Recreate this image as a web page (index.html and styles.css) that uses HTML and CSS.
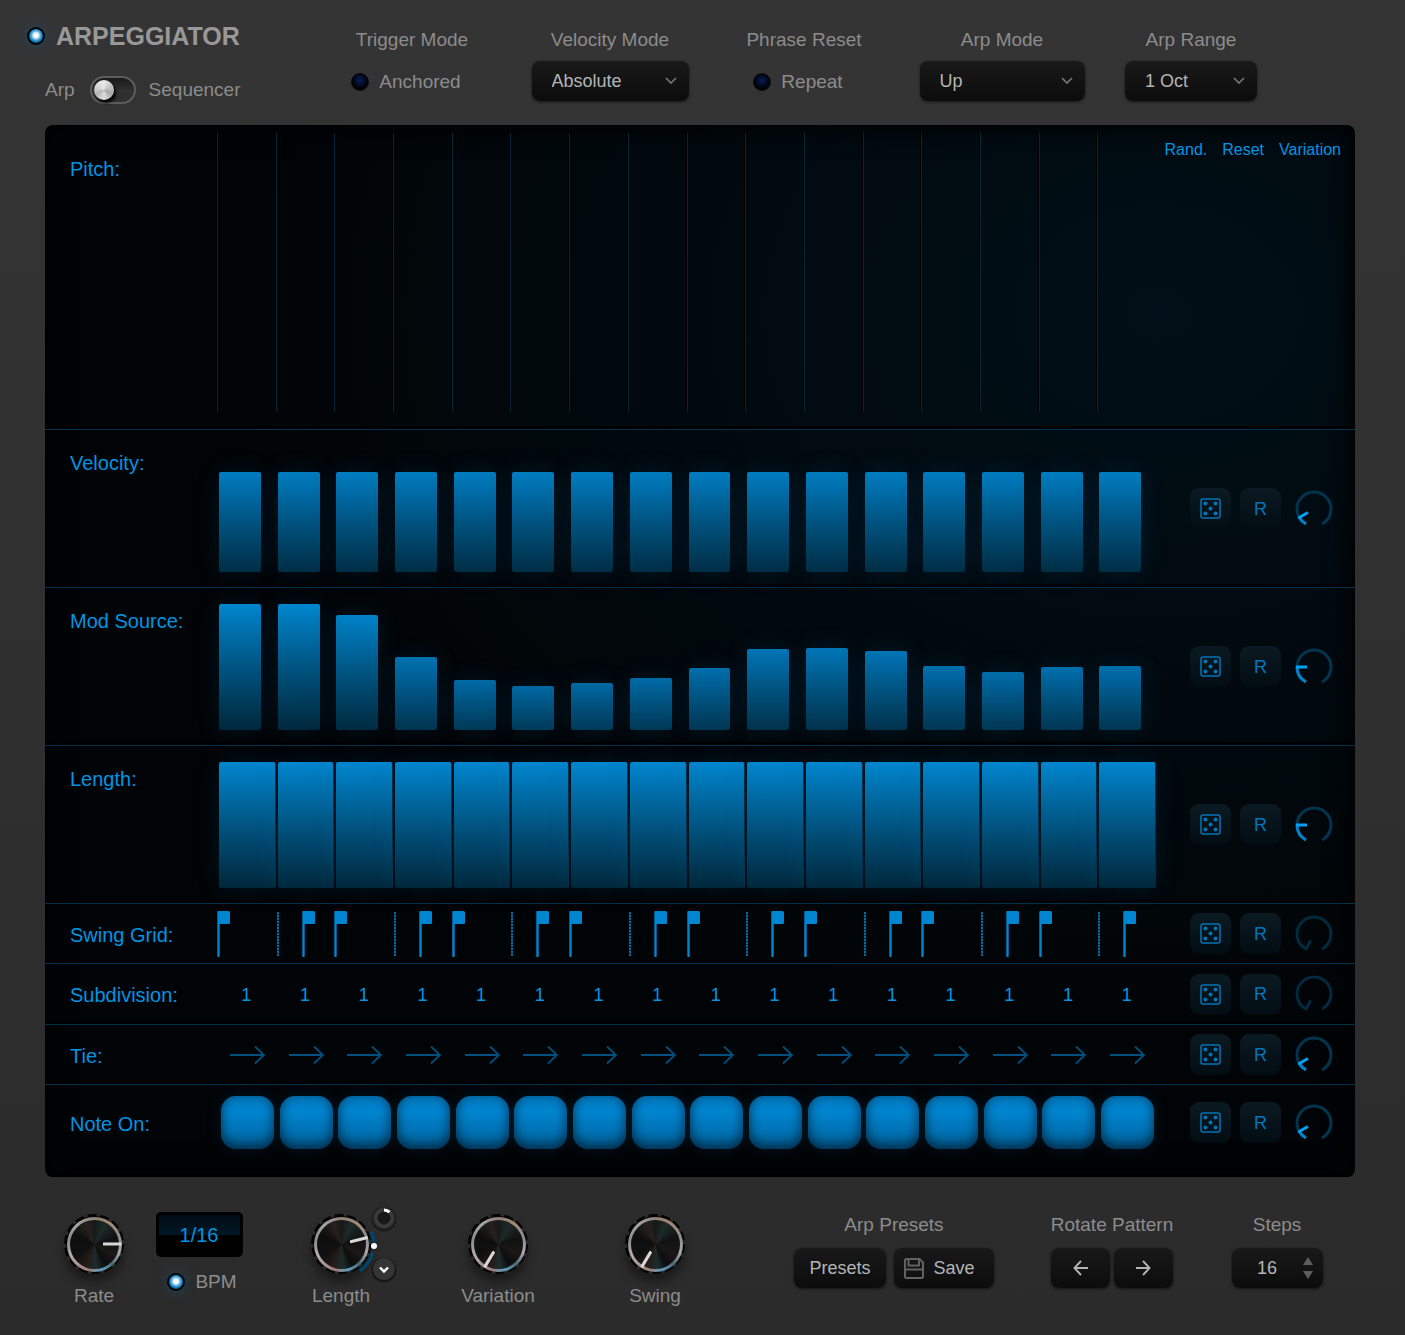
FILE: index.html
```html
<!DOCTYPE html>
<html lang="en">
<head>
    <meta charset="UTF-8">
    <meta name="viewport" content="width=device-width, initial-scale=1.0">
    <title>Arpeggiator</title>
    <link rel="stylesheet" href="styles.css">
</head>
<body>
    <svg class="symbols" aria-hidden="true">
        <symbol id="chevron" viewBox="0 0 12 8">
            <path d="M1 1 L6 6 L11 1" fill="none" stroke="currentColor" stroke-width="1.6"/>
        </symbol>
        <symbol id="dice" viewBox="0 0 21 21">
            <rect x="1" y="1" width="19" height="19" rx="2" fill="none" stroke="currentColor" stroke-width="1.5"/>
            <circle cx="5.5" cy="5.5" r="2" fill="currentColor"/>
            <circle cx="15.5" cy="5.5" r="2" fill="currentColor"/>
            <circle cx="10.5" cy="10.5" r="2" fill="currentColor"/>
            <circle cx="5.5" cy="15.5" r="2" fill="currentColor"/>
            <circle cx="15.5" cy="15.5" r="2" fill="currentColor"/>
        </symbol>
        <symbol id="tie-arrow" viewBox="0 0 35 18">
            <path d="M0 9 H34 M25 0.5 L34 9 L25 17.5" fill="none" stroke="currentColor" stroke-width="1.8"/>
        </symbol>
        <symbol id="flag" viewBox="0 0 13 46">
            <rect x="0" y="0" width="3" height="46" rx="1" fill="#005f98"/>
            <rect x="1" y="0" width="1" height="46" fill="#0086d1"/>
            <rect x="1" y="0" width="12" height="13" rx="1.5" fill="#0086d1"/>
        </symbol>
        <symbol id="teeth" viewBox="0 0 60 60">
            <circle cx="30" cy="30" r="27.5" fill="none" stroke="#030303" stroke-width="5" pathLength="140" stroke-dasharray="7 3"/>
            <circle cx="30" cy="30" r="28" fill="#030303"/>
        </symbol>
    </svg>

    <header class="top">
        <div class="brand">
            <label class="power">
                <input type="checkbox" class="led" checked>
                <span>ARPEGGIATOR</span>
            </label>
            <div class="mode">
                <label for="mode">Arp</label>
                <input type="checkbox" class="switch" id="mode">
                <label for="mode">Sequencer</label>
            </div>
        </div>
        <div class="setting">
            <span class="title">Trigger Mode</span>
            <label class="check"><input type="checkbox" class="led">Anchored</label>
        </div>
        <div class="setting">
            <label class="title" for="velocity-mode">Velocity Mode</label>
            <div class="select velocity-mode">
                <select id="velocity-mode"><option>Absolute</option></select>
                <svg><use href="#chevron"/></svg>
            </div>
        </div>
        <div class="setting">
            <span class="title">Phrase Reset</span>
            <label class="check"><input type="checkbox" class="led">Repeat</label>
        </div>
        <div class="setting">
            <label class="title" for="arp-mode">Arp Mode</label>
            <div class="select arp-mode">
                <select id="arp-mode"><option>Up</option></select>
                <svg><use href="#chevron"/></svg>
            </div>
        </div>
        <div class="setting">
            <label class="title" for="arp-range">Arp Range</label>
            <div class="select arp-range">
                <select id="arp-range"><option>1 Oct</option></select>
                <svg><use href="#chevron"/></svg>
            </div>
        </div>
    </header>

    <main class="panel">
        <section class="row pitch">
            <h2>Pitch:</h2>
            <div class="steps" data-kind="pitch"></div>
            <div class="links">
                <button type="button">Rand.</button>
                <button type="button">Reset</button>
                <button type="button">Variation</button>
            </div>
        </section>
        <section class="row tall velocity">
            <h2>Velocity:</h2>
            <div class="steps" data-kind="velocity"></div>
            <div class="tools" data-angle="-120"></div>
        </section>
        <section class="row tall">
            <h2>Mod Source:</h2>
            <div class="steps" data-kind="mod"></div>
            <div class="tools" data-angle="-90"></div>
        </section>
        <section class="row tall length">
            <h2>Length:</h2>
            <div class="steps" data-kind="length"></div>
            <div class="tools" data-angle="-90"></div>
        </section>
        <section class="row swing">
            <h2>Swing Grid:</h2>
            <div class="steps" data-kind="swing"></div>
            <div class="tools" data-angle="-152"></div>
        </section>
        <section class="row subdivision">
            <h2>Subdivision:</h2>
            <div class="steps" data-kind="subdivision"></div>
            <div class="tools" data-angle="-152"></div>
        </section>
        <section class="row tie">
            <h2>Tie:</h2>
            <div class="steps" data-kind="tie"></div>
            <div class="tools" data-angle="-120"></div>
        </section>
        <section class="row notes">
            <h2>Note On:</h2>
            <div class="steps" data-kind="note"></div>
            <div class="tools" data-angle="-120"></div>
        </section>
    </main>

    <footer class="bottom">
        <div class="knob">
            <div class="dial">
                <svg class="teeth"><use href="#teeth"/></svg>
                <span class="cap"></span>
                <span class="pointer" data-turn="90"></span>
                <input type="range" id="rate" min="0" max="100" value="80">
            </div>
            <label for="rate">Rate</label>
        </div>
        <div class="tempo">
            <input type="text" class="display" value="1/16" aria-label="Rate value">
            <label class="check"><input type="checkbox" class="led" checked>BPM</label>
        </div>
        <div class="knob">
            <div class="dial">
                <svg class="teeth"><use href="#teeth"/></svg>
                <span class="cap"></span>
                <span class="pointer" data-turn="76"></span>
                <input type="range" id="length" min="0" max="100" value="75">
                <svg class="modulation" viewBox="0 0 44 78">
                    <path d="M16 27 Q18.5 32 19 37 M18 47 Q15 58 5 66" fill="none" stroke="#00456f" stroke-width="3"/>
                    <circle cx="19" cy="41" r="3" fill="#fff"/>
                    <circle cx="29" cy="14" r="12.5" fill="#1a1a1a"/>
                    <circle cx="29" cy="13" r="11" fill="#303030"/>
                    <circle cx="29" cy="13" r="8" fill="none" stroke="#3c3c3c" stroke-width="3"/>
                    <circle cx="29" cy="13" r="6.5" fill="#181818"/>
                    <path d="M29 5 A8 8 0 0 1 34.5 7.2" fill="none" stroke="#fff" stroke-width="3"/>
                    <circle cx="29" cy="65" r="12.5" fill="#161616"/>
                    <circle cx="29" cy="64" r="11" fill="#353535"/>
                    <path d="M25 62.500 L29 66.500 L33 62.500" fill="none" stroke="#fff" stroke-width="2.4"/>
                </svg>
            </div>
            <label for="length">Length</label>
        </div>
        <div class="knob">
            <div class="dial">
                <svg class="teeth"><use href="#teeth"/></svg>
                <span class="cap"></span>
                <span class="pointer" data-turn="211"></span>
                <input type="range" id="variation" min="0" max="100" value="0">
            </div>
            <label for="variation">Variation</label>
        </div>
        <div class="knob">
            <div class="dial">
                <svg class="teeth"><use href="#teeth"/></svg>
                <span class="cap"></span>
                <span class="pointer" data-turn="211"></span>
                <input type="range" id="swing" min="0" max="100" value="0">
            </div>
            <label for="swing">Swing</label>
        </div>
        <div class="group">
            <span class="title">Arp Presets</span>
            <div class="buttons presets">
                <button type="button" class="button">Presets</button>
                <button type="button" class="button save">
                    <svg viewBox="0 0 20 21"><path d="M2 1 H15.5 L19 4.500 V19 L18 20 H2 L1 19 V2 Z M4.5 1 V7.500 H15 V1 M1 11.500 H19" fill="none" stroke="#626262" stroke-width="2"/></svg>
                    Save
                </button>
            </div>
        </div>
        <div class="group">
            <span class="title">Rotate Pattern</span>
            <div class="buttons rotate">
                <button type="button" class="button" aria-label="Rotate left">
                    <svg viewBox="0 0 15 16"><path d="M15 8 H1.5 M8 1 L1.5 8 L8 15" fill="none" stroke="currentColor" stroke-width="1.9"/></svg>
                </button>
                <button type="button" class="button" aria-label="Rotate right">
                    <svg viewBox="0 0 15 16"><path d="M0 8 H13.5 M7 1 L13.5 8 L7 15" fill="none" stroke="currentColor" stroke-width="1.9"/></svg>
                </button>
            </div>
        </div>
        <div class="group">
            <label class="title" for="steps">Steps</label>
            <div class="stepper">
                <input type="text" id="steps" value="16">
                <div class="arrows">
                    <button type="button" aria-label="More steps"><svg viewBox="0 0 10 8"><path d="M5 0 L10 8 H0 Z" fill="#5e5e5e"/></svg></button>
                    <button type="button" aria-label="Fewer steps"><svg viewBox="0 0 10 8"><path d="M0 0 H10 L5 8 Z" fill="#5e5e5e"/></svg></button>
                </div>
            </div>
        </div>
    </footer>

    <script src="script.js"></script>
</body>
</html>
```

FILE: styles.css
```css
* {
    box-sizing: border-box;
}

body {
    margin: 0;
    min-height: 100vh;
    background: linear-gradient(#343434, #2b2b2b);
    color: #8c8c8c;
    font-family: "Liberation Sans", Arial, sans-serif;
    font-size: 19px;
    line-height: 24px;
}

button,
input,
select {
    margin: 0;
    border: 0;
    padding: 0;
    background: none;
    color: inherit;
    font: inherit;
}

svg {
    display: block;
}

.symbols {
    position: absolute;
    width: 0;
    height: 0;
}

/* header */

.top {
    display: grid;
    grid-template-columns: 286fr 198fr 198fr 190fr 206fr 172fr 128fr;
    padding-left: 27px;
    height: 125px;
}

.brand {
    padding-top: 22px;
}

.power {
    display: flex;
    align-items: center;
    gap: 11px;
    color: #989898;
    font-size: 25px;
    font-weight: bold;
    line-height: 28px;
}

.mode {
    display: flex;
    align-items: center;
    padding: 26px 0 0 18px;
}

.led {
    appearance: none;
    flex: none;
    width: 18px;
    height: 18px;
    border: 1px solid #0a0a0a;
    border-radius: 50%;
    background: radial-gradient(circle at 50% 40%, #061f56 0, #020a24 40%, #010206 60%);
}

.led:checked {
    border: 2px solid #030608;
    background: radial-gradient(circle at 50% 45%, #fff 0, #f2f9ff 22%, #4fa9dd 45%, #0a6cab 65%, #02263f 85%);
    box-shadow: 0 0 12px rgba(0, 110, 180, 0.4);
}

.switch {
    appearance: none;
    width: 46px;
    height: 28px;
    margin: 0 13px 0 15px;
    border: 2px solid #5d5d5d;
    border-radius: 14px;
    padding: 2px;
    background: linear-gradient(#191919, #303030 50%);
}

.switch::before {
    content: "";
    display: block;
    width: 20px;
    height: 20px;
    border-radius: 50%;
    background: conic-gradient(#e8e8e8, #c5c5c5, #a8a8a8, #dedede, #b5b5b5, #d8d8d8, #e8e8e8);
    box-shadow: 2px 3px 3px #000;
}

.setting,
.group {
    display: flex;
    flex-direction: column;
    align-items: center;
}

.setting {
    gap: 9px;
    padding-top: 28px;
}

.title {
    white-space: nowrap;
}

.check {
    display: flex;
    align-items: center;
    gap: 10px;
}

.setting .check {
    height: 41px;
    padding-right: 12px;
}

.select {
    position: relative;
}

.select select {
    appearance: none;
    width: 100%;
    height: 40px;
    padding-left: 20px;
}

.select svg {
    position: absolute;
    top: 16px;
    right: 12px;
    width: 12px;
    height: 8px;
    color: #777;
    pointer-events: none;
}

.select,
.button,
.stepper {
    border-radius: 8px;
    background: linear-gradient(#191919, #0c0c0c);
    box-shadow: 0 1px 3px rgba(0, 0, 0, 0.6);
    color: #b4b4b4;
    font-size: 18px;
}

.velocity-mode {
    width: 157px;
}

.arp-mode {
    width: 165px;
}

.arp-range {
    width: 132px;
}

/* sequencer panel */

.panel {
    margin: 0 50px 0 45px;
    border-radius: 8px;
    background:
        radial-gradient(ellipse at 85% 18%, rgba(0, 28, 44, 0.45), transparent 60%),
        #010406;
    box-shadow: inset 0 0 26px 4px #000;
    color: #0094e2;
    overflow: hidden;
}

.row {
    display: grid;
    grid-template-columns: 147px 1fr 177px;
    height: 60px;
    padding: 0 22px 0 25px;
    border-bottom: 1px solid #03304a;
    box-shadow: inset 0 -3px 0 #000;
}

.row h2 {
    align-self: center;
    margin: 0;
    padding-top: 2px;
    font-size: 20px;
    font-weight: normal;
    line-height: 24px;
}

.pitch {
    height: 305px;
}

.pitch h2 {
    align-self: start;
    padding-top: 32px;
}

.tall {
    height: 158px;
}

.tall h2 {
    align-self: start;
    padding-top: 21px;
}

.subdivision {
    height: 61px;
}

.notes {
    height: 92px;
    border-bottom: 0;
    padding-bottom: 17px;
}

.steps {
    display: grid;
    grid-template-columns: repeat(16, 1fr);
}

.step {
    display: flex;
    align-items: center;
    justify-content: center;
    padding-left: 2px;
}

.pitch .step {
    margin: 8px 0 17px;
    border-left: 1px solid #042636;
    box-shadow: -1px 0 0 #000;
}

.tall .step {
    align-items: flex-end;
    justify-content: flex-start;
    padding: 16px 0 15px 2px;
}

/* taller bars run from a brighter top to a darker foot */
.bar {
    width: 74%;
    height: var(--value);
    border-radius: 2px;
    background: linear-gradient(
        color-mix(in srgb, #0086cf var(--value), #00588c),
        color-mix(in srgb, #00283c var(--value), #004468)
    );
    box-shadow: 0 0 24px rgba(0, 110, 180, 0.16);
}

.length .bar {
    width: 100%;
    border-right: 1px solid #002e49;
}

.swing .step {
    align-items: flex-start;
    justify-content: flex-start;
    gap: 23px;
    padding: 7px 0 0;
}

.flag {
    width: 13px;
    height: 46px;
}

.dots {
    width: 2px;
    height: 44px;
    margin-top: 1px;
    background: repeating-linear-gradient(#006da8 0, #006da8 2px, #00283e 2px, #00283e 3px);
}

.swing .step:nth-child(even) {
    padding-left: 1px;
}

.subdivision .step {
    padding: 2px 0 0;
    font-size: 18px;
}

.tie .step {
    color: #00507f;
}

.tie .step svg {
    width: 35px;
    height: 18px;
}

.note {
    appearance: none;
    width: 53px;
    height: 53px;
    border-radius: 15px;
}

.note:checked {
    background: linear-gradient(#0078bd, #0084d0 30%, #00629a);
    box-shadow: inset 0 -4px 12px rgba(0, 30, 50, 0.85), 0 0 16px rgba(0, 100, 160, 0.2);
}

.links {
    display: flex;
    justify-content: flex-end;
    align-items: flex-start;
    gap: 15px;
    margin-right: -8px;
    padding-top: 13px;
    font-size: 16px;
}

.tools {
    display: flex;
    align-items: center;
    justify-content: flex-end;
    gap: 9px;
}

.tool {
    display: flex;
    align-items: center;
    justify-content: center;
    width: 41px;
    height: 41px;
    border-radius: 9px;
    background: linear-gradient(#0b1a22, #020c13);
    color: #0074b8;
    font-size: 18px;
}

.tool svg {
    width: 21px;
    height: 21px;
}

.amount {
    position: relative;
    width: 40px;
    height: 40px;
    margin: 0 -1px 0 4px;
}

.amount input,
.dial input {
    position: absolute;
    inset: 0;
    width: 100%;
    height: 100%;
    opacity: 0;
}

/* footer */

.bottom {
    display: grid;
    grid-template-columns: 114fr 96fr 188fr 126fr 188fr 290fr 146fr 184fr;
    padding: 0 36px 24px 37px;
}

.knob {
    display: flex;
    flex-direction: column;
    align-items: center;
    gap: 10px;
    padding-top: 37px;
}

.dial {
    position: relative;
    display: grid;
    place-items: center;
    width: 60px;
    height: 60px;
    border-radius: 50%;
    box-shadow: 0 8px 10px rgba(0, 0, 0, 0.4);
}

.teeth,
.cap,
.pointer {
    grid-area: 1 / 1;
}

.teeth {
    width: 60px;
    height: 60px;
}

.cap {
    width: 55px;
    height: 55px;
    border: 3px solid transparent;
    border-radius: 50%;
    background:
        conic-gradient(#171918, #1c2b28 8%, #111 20%, #1a1716 33%, #0d0d0d 42%, #1b2d2b 49%, #241c19 56%, #101010 66%, #0e0e0e 82%, #26211e 94%, #171918) padding-box,
        conic-gradient(#8d8078, #a58972 10%, #8c8c90 20%, #a9a9ad 30%, #4b6a75 38%, #5d9cc0 46%, #a07e76 54%, #b5abb0 68%, #8b8b8b 78%, #a5a5a5 88%, #8d8078) border-box;
}

.pointer {
    width: 3px;
    height: 54px;
    background: linear-gradient(#d8d8d8 18px, transparent 18px);
}

.modulation {
    position: absolute;
    top: -9px;
    left: 44px;
    width: 44px;
    height: 78px;
    pointer-events: none;
}

.tempo {
    display: flex;
    flex-direction: column;
    align-items: center;
    gap: 13px;
    padding-top: 35px;
}

.tempo .check {
    padding-left: 6px;
}

.display {
    width: 87px;
    height: 45px;
    border: 3px solid #000;
    border-radius: 5px;
    padding-top: 2px;
    background: linear-gradient(#000c14, #001826 20px, #000 20px);
    color: #0094e2;
    font-size: 20px;
    text-align: center;
}

.group {
    gap: 11px;
    padding-top: 36px;
}

.buttons {
    display: flex;
    gap: 8px;
}

.rotate {
    gap: 4px;
}

.button {
    display: flex;
    align-items: center;
    justify-content: center;
    gap: 10px;
    height: 40px;
    padding: 0 15px;
}

.save {
    padding: 0 19px 0 10px;
}

.save svg {
    width: 20px;
    height: 21px;
}

.rotate .button {
    width: 59px;
}

.rotate svg {
    width: 15px;
    height: 16px;
}

.stepper {
    display: flex;
    align-items: center;
    width: 91px;
    height: 40px;
    padding-right: 10px;
}

.stepper input {
    flex: 1;
    min-width: 0;
    text-align: center;
}

.arrows button {
    display: block;
    padding: 3px 0;
}

.arrows svg {
    width: 10px;
    height: 8px;
}
```

FILE: script.js
```javascript
const STEPS = 16;
const velocity = Array(STEPS).fill(79);
const mod = [100, 100, 91, 58, 40, 35, 37, 41, 49, 64, 65, 63, 51, 46, 50, 51];
const gate = Array(STEPS).fill(100);

function bar(value) {
    return `<div class="bar" style="--value: ${value}%"></div>`;
}

const draw = {
    pitch: () => '',
    velocity: i => bar(velocity[i]),
    mod: i => bar(mod[i]),
    length: i => bar(gate[i]),
    swing: i => (i % 2 ? '<div class="dots"></div>' : '') + '<svg class="flag"><use href="#flag"/></svg>',
    subdivision: () => '1',
    tie: () => '<svg><use href="#tie-arrow"/></svg>',
    note: i => `<input type="checkbox" class="note" aria-label="Note ${i + 1}" checked>`
};

document.querySelectorAll('.steps').forEach(el => {
    for (let i = 0; i < STEPS; i++) {
        el.insertAdjacentHTML('beforeend', `<div class="step">${draw[el.dataset.kind](i)}</div>`);
    }
});

// point on the small dial, angle in degrees clockwise from the top
function point(angle, r) {
    const a = angle * Math.PI / 180;
    return (20 + r * Math.sin(a)).toFixed(2) + ' ' + (20 - r * Math.cos(a)).toFixed(2);
}

function arc(from, to) {
    const large = to - from > 180 ? 1 : 0;
    return `M${point(from, 17)} A17 17 0 ${large} 1 ${point(to, 17)}`;
}

document.querySelectorAll('.tools').forEach(el => {
    const angle = Number(el.dataset.angle);
    const off = angle <= -152;
    el.innerHTML = `
        <button type="button" class="tool" aria-label="Randomize"><svg><use href="#dice"/></svg></button>
        <button type="button" class="tool">R</button>
        <div class="amount">
            <svg viewBox="0 0 40 40" fill="none" stroke-width="3">
                <path d="${arc(-152, 152)}" stroke="${off ? '#02293f' : '#03344f'}"/>
                ${off ? '' : `<path d="${arc(-152, angle)}" stroke="#0083cc"/>`}
                <path d="M${point(angle, 18)} L${point(angle, 7)}" stroke="${off ? '#02293f' : '#00a2f8'}"/>
            </svg>
            <input type="range" min="-152" max="152" value="${angle}" aria-label="Random amount">
        </div>`;
});

document.querySelectorAll('.pointer').forEach(el => {
    el.style.transform = `rotate(${el.dataset.turn}deg)`;
});
```
